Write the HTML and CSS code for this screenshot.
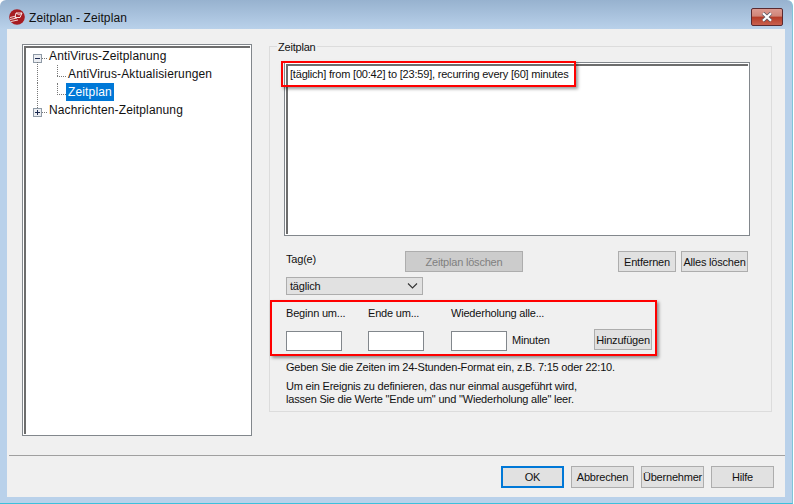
FILE: index.html
```html
<!DOCTYPE html>
<html lang="de">
<head>
<meta charset="utf-8">
<title>Zeitplan - Zeitplan</title>
<link rel="stylesheet" href="styles.css">
</head>
<body>
<div class="window">
  <header class="titlebar">
    <svg class="app-icon" width="16" height="16" viewBox="0 0 16 16">
      <circle cx="8" cy="8" r="7.8" fill="#a61c22"/>
      <path d="M1 8.5 7 7M1 10.5 8 9M2 12.5 9 11" stroke="#f3d5d5" stroke-width="1" fill="none"/>
      <path d="M7 4h6L11 8.5H6z" fill="none" stroke="#f8e5e5" stroke-width="1"/>
      <path d="M7 4l3 2 3-2" fill="none" stroke="#f8e5e5" stroke-width=".8"/>
    </svg>
    <span class="title">Zeitplan - Zeitplan</span>
    <button class="close" aria-label="Schließen">
      <svg width="14" height="10" viewBox="0 0 14 10"><path d="M3 1.2 11 8.8M11 1.2 3 8.8" stroke="#5a5a66" stroke-width="3.6" fill="none"/><path d="M3 1.2 11 8.8M11 1.2 3 8.8" stroke="#fff" stroke-width="2.2" fill="none"/></svg>
    </button>
  </header>
  <div class="client">
    <div class="main">
      <div class="tree">
        <div class="node">
          <span class="toggle">
            <svg width="9" height="9" viewBox="0 0 9 9"><rect x=".5" y=".5" width="8" height="8" fill="#eceef2" stroke="#8f9aa6"/><path d="M2 4.5h5" stroke="#1c2a50"/></svg>
          </span>
          <span class="dash"></span>
          <span class="label">AntiVirus-Zeitplanung</span>
        </div>
        <div class="node child">
          <span class="dash long"></span>
          <span class="label">AntiVirus-Aktualisierungen</span>
        </div>
        <div class="node child last">
          <span class="dash long"></span>
          <span class="label selected">Zeitplan</span>
        </div>
        <div class="node">
          <span class="toggle">
            <svg width="9" height="9" viewBox="0 0 9 9"><rect x=".5" y=".5" width="8" height="8" fill="#eceef2" stroke="#8f9aa6"/><path d="M2 4.5h5M4.5 2v5" stroke="#1c2a50"/></svg>
          </span>
          <span class="dash"></span>
          <span class="label">Nachrichten-Zeitplanung</span>
        </div>
      </div>
      <section class="group">
        <span class="group-title">Zeitplan</span>
        <div class="list">
          <div class="list-item">[täglich] from [00:42] to [23:59], recurring every [60] minutes</div>
        </div>
        <div class="controls">
          <div class="day">
            <span class="caption">Tag(e)</span>
            <div class="select">täglich
              <svg width="11" height="6" viewBox="0 0 11 6"><path d="M1 .5 5.5 5 10 .5" fill="none" stroke="#333" stroke-width="1.1"/></svg>
            </div>
          </div>
          <button class="btn disabled">Zeitplan löschen</button>
          <button class="btn remove">Entfernen</button>
          <button class="btn clear">Alles löschen</button>
        </div>
        <div class="times">
          <div class="field">
            <span class="caption">Beginn um...</span>
            <span class="input"></span>
          </div>
          <div class="field">
            <span class="caption">Ende um...</span>
            <span class="input"></span>
          </div>
          <div class="field">
            <span class="caption">Wiederholung alle...</span>
            <div class="input-row"><span class="input"></span><span class="unit">Minuten</span></div>
          </div>
          <button class="btn add">Hinzufügen</button>
        </div>
        <p class="hint">Geben Sie die Zeiten im 24-Stunden-Format ein, z.B. 7:15 oder 22:10.</p>
        <p class="hint second">Um ein Ereignis zu definieren, das nur einmal ausgeführt wird,<br>lassen Sie die Werte "Ende um" und "Wiederholung alle" leer.</p>
        <div class="mark mark-list"></div>
        <div class="mark mark-times"></div>
      </section>
    </div>
    <footer class="footer">
      <button class="btn foot primary">OK</button>
      <button class="btn foot">Abbrechen</button>
      <button class="btn foot">Übernehmer</button>
      <button class="btn foot">Hilfe</button>
    </footer>
  </div>
</div>
</body>
</html>
```
FILE: styles.css
```css
* { box-sizing: border-box; }
html, body { margin: 0; padding: 0; }
body {
  width: 794px;
  height: 504px;
  overflow: hidden;
  background: #fff;
  font: 11px/14px "Liberation Sans", Arial, sans-serif;
  letter-spacing: -.2px;
  color: #111;
}
.window {
  width: 793px;
  height: 504px;
  padding: 0 7px 6px 7px;
  display: flex;
  flex-direction: column;
  background: linear-gradient(#97b2cf 0, #b9d1ea 29px);
  border-bottom: 1px solid #3cc0dc;
  border-right: 1px solid #7fc4d8;
  border-radius: 6px 6px 0 0;
}
.titlebar {
  height: 29px;
  display: flex;
  align-items: flex-start;
  padding: 9px 0 0 2px;
  flex: none;
}
.title { margin-left: 4px; font-size: 12px; line-height: 18px; letter-spacing: .1px; }
.close {
  margin-left: auto;
  margin-right: 2px;
  margin-top: -1px;
  width: 32px;
  height: 18px;
  padding: 0;
  display: flex;
  align-items: center;
  justify-content: center;
  border: 1px solid #5a2a30;
  border-radius: 2px;
  background: linear-gradient(#dc9a90 0, #d08578 45%, #b53b26 50%, #c9604e 100%);
}
.client {
  flex: 1;
  background: #f0f0f0;
  display: flex;
  flex-direction: column;
  min-height: 0;
}
.main {
  height: 426px;
  padding: 15px 13px 0 15px;
  display: flex;
  gap: 17px;
  align-items: flex-start;
  flex: none;
}
.tree {
  width: 230px;
  height: 392px;
  background: #fff;
  border: 1px solid #82878c;
  box-shadow: inset 0 0 0 1px #fff, inset 2px 2px 0 1px #6d6d6d;
  padding: 2px 0 0 10px;
  font-size: 12px;
  letter-spacing: .14px;
}
.node {
  height: 18px;
  display: flex;
  align-items: center;
  position: relative;
}
.toggle { width: 9px; height: 9px; display: flex; margin-top: 4px; }
.dash { width: 5px; border-top: 1px dotted #777; margin-top: 4px; }
.dash.long { width: 9px; }
.label { padding: 0 2px; height: 18px; line-height: 18px; white-space: nowrap; }
.selected { background: #0078d7; color: #fff; }
.child { padding-left: 24px; }
.child::before {
  content: "";
  position: absolute;
  left: 24px;
  top: 0;
  height: 11px;
  border-left: 1px dotted #777;
}
.child::after {
  content: "";
  position: absolute;
  left: 4px;
  top: -3px;
  height: 21px;
  border-left: 1px dotted #777;
}
.child.last::before { height: 12px; }
.child.last::after { top: 0; height: 25px; }
.group {
  width: 503px;
  height: 366px;
  margin-top: 2px;
  border: 1px solid #dcdcdc;
  padding: 15px 21px 0 14px;
  position: relative;
}
.group-title {
  position: absolute;
  left: 7px;
  top: -7px;
  background: #f0f0f0;
  padding: 0 1px;
}
.list {
  width: 466px;
  height: 174px;
  background: #fff;
  border: 1px solid #82878c;
  box-shadow: inset 0 0 0 1px #fff, inset 2px 2px 0 1px #6d6d6d;
  padding: 4px 0 0 5px;
}
.list-item { white-space: nowrap; }
.controls {
  display: flex;
  align-items: flex-start;
  margin: 15px 0 0 2px;
  height: 49px;
}
.day { width: 119px; display: flex; flex-direction: column; gap: 11px; margin-top: 1px; }
.select {
  width: 137px;
  height: 18px;
  background: #e1e1e1;
  border: 1px solid #adadad;
  padding: 0 4px 0 3px;
  display: flex;
  align-items: center;
  justify-content: space-between;
}
.btn {
  font: inherit;
  letter-spacing: inherit;
  color: #111;
  background: #e1e1e1;
  border: 1px solid #adadad;
  padding: 0;
  height: 21px;
  white-space: nowrap;
}
.disabled { width: 118px; background: #cccccc; color: #808080; }
.remove { width: 58px; margin-left: 95px; }
.clear { width: 67px; margin-left: 5px; }
.times { display: flex; margin-left: 2px; height: 60px; }
.field { display: flex; flex-direction: column; gap: 11px; padding-top: 6px; width: 82px; }
.field:nth-child(2) { width: 83px; }
.field:nth-child(3) { width: 143px; }
.input { display: block; width: 56px; height: 20px; background: #fff; border: 1px solid #82878c; }
.input-row { display: flex; align-items: center; gap: 5px; }
.unit { white-space: nowrap; margin-top: -3px; }
.add { width: 58px; margin-top: 29px; }
.hint { margin: 0 0 0 2px; }
.second { margin-top: 6px; line-height: 13px; }
.mark {
  position: absolute;
  border: 2px solid #f00;
  box-shadow: 2px 2px 3px rgba(0,0,0,.4);
  pointer-events: none;
}
.mark-list { left: 11px; top: 14px; width: 295px; height: 26px; }
.mark-times { left: 0; top: 253px; width: 387px; height: 56px; }
.footer {
  flex: 1;
  margin-left: 2px;
  border-top: 1px solid #a0a0a0;
  display: flex;
  justify-content: flex-end;
  gap: 7px;
  padding: 10px 11px 0 0;
}
.foot { width: 63px; height: 22px; }
.primary { border: 2px solid #0078d7; }
```
